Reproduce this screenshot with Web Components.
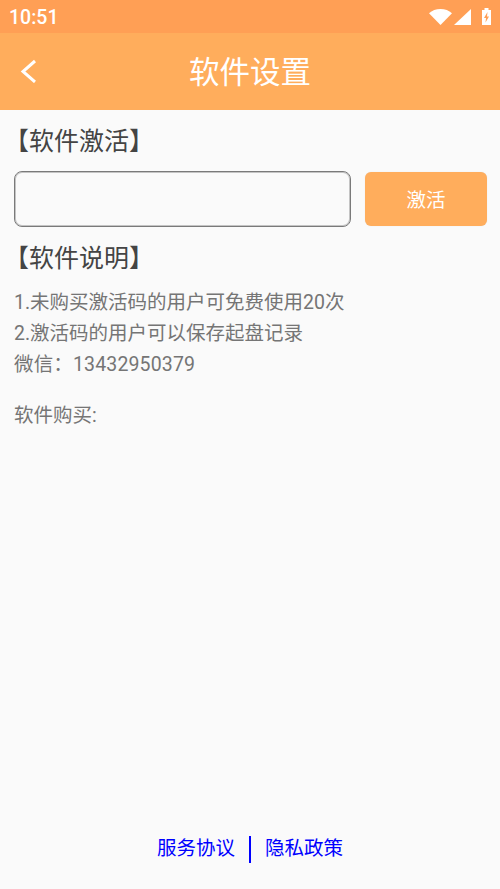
<!DOCTYPE html>
<html lang="zh">
<head>
<meta charset="utf-8">
<title>软件设置</title>
<style>
  html, body { margin: 0; height: 100%; }
  body { font-family: Roboto, "Noto Sans CJK SC", sans-serif; background: #fafafa; }
</style>
</head>
<body>
<settings-page></settings-page>

<script>
class StatusBar extends HTMLElement {
  constructor() {
    super();
    this.attachShadow({ mode: 'open' });
    this.shadowRoot.innerHTML = `
      <style>
        :host { display: flex; align-items: center; justify-content: space-between; height: 33px; padding: 0 9px 0 9px; box-sizing: border-box; background: #ff9f55; color: #fff; font: 500 19.5px Roboto, sans-serif; }
        span { position: relative; top: 1px; }
        .icons { display: flex; align-items: flex-end; gap: 2px; height: 17px; margin-bottom: 1px; }
        svg { display: block; fill: #fff; }
      </style>
      <span>10:51</span>
      <div class="icons">
        <svg width="23" height="16" viewBox="0 0 23 16"><path d="M0 4.200C3 1.600 7 0 11.500 0S20 1.600 23 4.200L11.500 16z"/></svg>
        <svg width="17" height="16" viewBox="0 0 17 16"><path d="M0 16L17 0v16z"/></svg>
        <svg style="margin-left:9px" width="9" height="17" viewBox="0 0 9 17"><path fill-rule="evenodd" d="M2.500 0h4v2H9v15H0V2h2.500zM5.500 4L2 10h2l-.5 4.500L7 8.500H5z"/></svg>
      </div>
    `;
  }
}

class AppBar extends HTMLElement {
  constructor() {
    super();
    this.attachShadow({ mode: 'open' });
    this.shadowRoot.innerHTML = `
      <style>
        :host { display: flex; align-items: center; justify-content: center; position: relative; height: 77px; padding-bottom: 3px; box-sizing: border-box; background: #ffad5c; color: #fff; font-size: 30.5px; }
        svg { position: absolute; left: 20px; top: 26px; }
      </style>
      <svg width="18" height="24" viewBox="0 0 18 24"><path d="M15 2L3 12.500 15 23" fill="none" stroke="#fff" stroke-width="3"/></svg>
      <slot></slot>
    `;
  }
}

class ActivateRow extends HTMLElement {
  constructor() {
    super();
    this.attachShadow({ mode: 'open' });
    this.shadowRoot.innerHTML = `
      <style>
        :host { display: flex; align-items: center; gap: 14px; padding: 0 13px 0 14px; }
        input { flex: 1; min-width: 0; height: 56px; box-sizing: border-box; border: 1px solid #7a7a7a; box-shadow: inset 0 0 0 1px #c4c4c4; border-radius: 8px; background: transparent; outline: none; }
        button { width: 122px; height: 54px; border: 0; border-radius: 6px; background: #ffad5c; color: #fff; font: 19.5px "Noto Sans CJK SC", sans-serif; box-shadow: 0 0 1px #ddd; padding: 0 0 1px; }
      </style>
      <input type="text">
      <button>激活</button>
    `;
  }
}

class FooterLinks extends HTMLElement {
  constructor() {
    super();
    this.attachShadow({ mode: 'open' });
    this.shadowRoot.innerHTML = `
      <style>
        :host { display: flex; align-items: center; justify-content: center; color: #0000ff; font-size: 19.5px; }
        span { line-height: 28px; }
        i { width: 2px; height: 27px; margin: 0 14px; background: #0000ff; }
      </style>
      <span>服务协议</span><i></i><span>隐私政策</span>
    `;
  }
}

class SettingsPage extends HTMLElement {
  constructor() {
    super();
    this.attachShadow({ mode: 'open' });
    this.shadowRoot.innerHTML = `
      <style>
        :host { display: flex; flex-direction: column; height: 889px; background: #fafafa; font-family: Roboto, "Noto Sans CJK SC", sans-serif; }
        main { flex: 1; display: flex; flex-direction: column; }
        h2 { margin: 0; padding-left: 4px; font-size: 25px; font-weight: 400; line-height: 36px; color: #444; }
        .first { margin-top: 14px; margin-bottom: 11px; }
        .second { margin-top: 14px; margin-bottom: 10px; }
        p { margin: 0; padding-left: 14px; font-size: 19.5px; line-height: 31px; color: #757575; }
        .wx { letter-spacing: 0.15px; }
        .buy { margin-top: 20px; }
        footer-links { margin-bottom: 26px; }
      </style>
      <status-bar></status-bar>
      <app-bar>软件设置</app-bar>
      <main>
        <h2 class="first">【软件激活】</h2>
        <activate-row></activate-row>
        <h2 class="second">【软件说明】</h2>
        <p>1.未购买激活码的用户可免费使用20次</p>
        <p>2.激活码的用户可以保存起盘记录</p>
        <p class="wx">微信：13432950379</p>
        <p class="buy">软件购买:</p>
      </main>
      <footer-links></footer-links>
    `;
  }
}

customElements.define('status-bar', StatusBar);
customElements.define('app-bar', AppBar);
customElements.define('activate-row', ActivateRow);
customElements.define('footer-links', FooterLinks);
customElements.define('settings-page', SettingsPage);
</script>
</body>
</html>
